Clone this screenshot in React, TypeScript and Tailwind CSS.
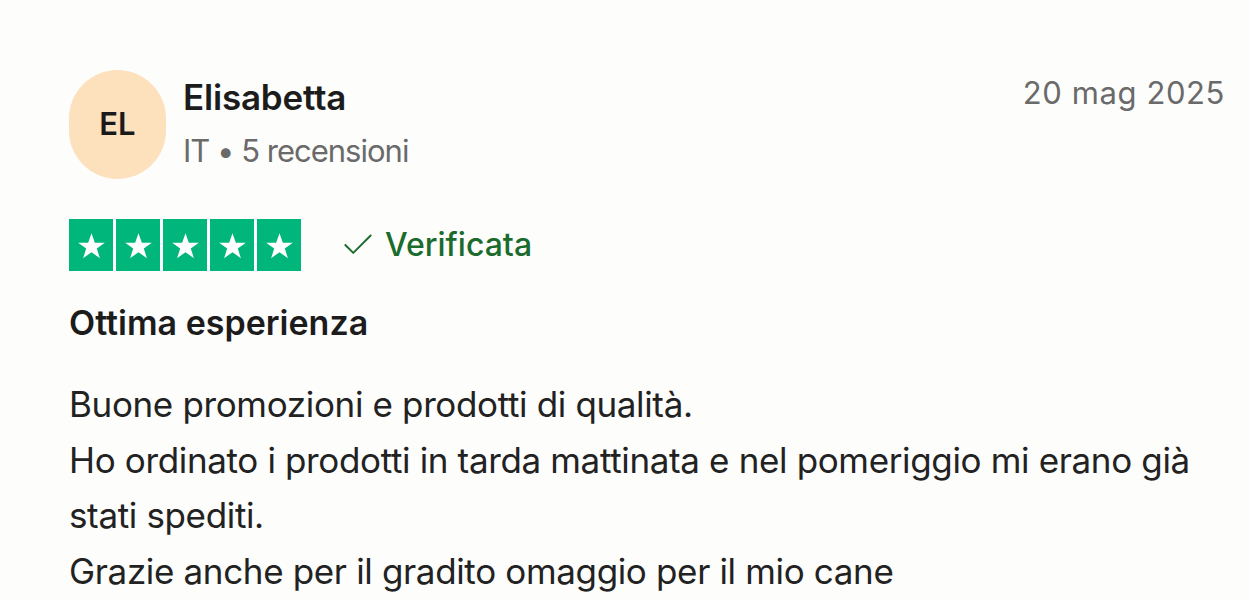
import { Check } from "lucide-react";

function Star() {
  return (
    <div className="w-[44px] h-[52px] bg-[#00b67a] flex items-center justify-center">
      <svg viewBox="0 0 24 24" className="w-[31px] h-[31px]" fill="white">
        <path d="M12 2.5l2.6 7.3h7.7l-6.2 4.6 2.4 7.4L12 17.2l-6.5 4.6 2.4-7.4-6.2-4.6h7.7z" />
      </svg>
    </div>
  );
}

export default function App() {
  const lines = [
    "Buone promozioni e prodotti di qualità.",
    "Ho ordinato i prodotti in tarda mattinata e nel pomeriggio mi erano già",
    "stati spediti.",
    "Grazie anche per il gradito omaggio per il mio cane",
  ];

  return (
    <div className="w-[1250px] h-[600px] bg-[#fdfdfc] pl-[69px] pr-[25px] pt-[70px] font-['Inter',sans-serif] text-[#1c1c1c] overflow-hidden">
      <div className="flex items-start justify-between">
        <div className="flex items-start">
          <div className="w-[97px] h-[109px] rounded-full bg-[#fde0bc] flex items-center justify-center text-[31px] font-semibold text-[#1a1a1a]">
            EL
          </div>
          <div className="ml-[17px] pt-[4px]">
            <div className="text-[35px] leading-[46px] font-semibold tracking-[-0.2px]">Elisabetta</div>
            <div className="mt-[11px] text-[31px] leading-[40px] text-[#6a6a6a] tracking-[-1px]">IT • 5 recensioni</div>
          </div>
        </div>
        <div className="text-[31px] leading-[46px] text-[#6a6a6a] tracking-[0.6px]">20 mag 2025</div>
      </div>

      <div className="mt-[40px] flex items-center">
        <div className="flex gap-[3px]">
          <Star />
          <Star />
          <Star />
          <Star />
          <Star />
        </div>
        <div className="ml-[38px] flex items-center text-[#1a6b2c]">
          <Check className="w-[38px] h-[38px]" strokeWidth={1.2} />
          <span className="ml-[8px] text-[32px] font-medium">Verificata</span>
        </div>
      </div>

      <div className="mt-[29px] text-[34px] leading-[46px] font-semibold">Ottima esperienza</div>

      <div className="mt-[31px] text-[35px] leading-[55.5px] tracking-[-0.35px] text-[#222222]">
        {lines.map((l) => (
          <div key={l}>{l}</div>
        ))}
      </div>
    </div>
  );
}
